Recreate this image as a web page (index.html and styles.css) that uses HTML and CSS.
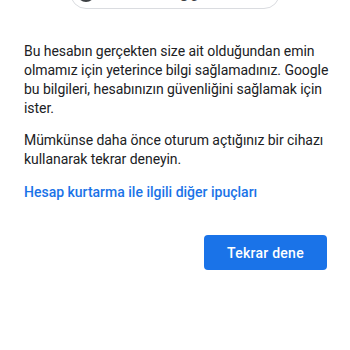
FILE: index.html
```html
<!DOCTYPE html>
<html lang="tr">
<head>
<meta charset="utf-8">
<link rel="stylesheet" href="styles.css">
</head>
<body>
<div class="page">
  <div class="chip-row">
    <div class="chip">
      <span class="avatar"></span>
      <span class="email">kullanici.adi@gmail.com</span>
      <span class="caret"></span>
    </div>
  </div>
  <p class="para first">Bu hesabın gerçekten size ait olduğundan emin olmamız için yeterince bilgi sağlamadınız. Google bu bilgileri, hesabınızın güvenliğini sağlamak için ister.</p>
  <p class="para">Mümkünse daha önce oturum açtığınız bir cihazı kullanarak tekrar deneyin.</p>
  <a class="link" href="#">Hesap kurtarma ile ilgili diğer ipuçları</a>
  <div class="actions">
    <button class="btn" type="button">Tekrar dene</button>
  </div>
</div>
</body>
</html>
```
FILE: styles.css
```css
html, body {
  margin: 0;
  padding: 0;
  background: #fff;
}
body {
  font-family: Roboto, "Noto Sans", Arial, sans-serif;
  color: #202124;
  overflow: hidden;
}
.page {
  padding: 0 24px;
}
.chip-row {
  display: flex;
  justify-content: center;
  margin-top: -23px;
}
.chip {
  box-sizing: border-box;
  width: 210px;
  height: 32px;
  border: 1px solid #dadce0;
  border-radius: 16px;
  display: flex;
  align-items: center;
  padding: 0 8px 0 6px;
  gap: 8px;
}
.avatar {
  width: 18px;
  height: 18px;
  border-radius: 50%;
  background: #3c4043;
  flex: none;
}
.email {
  font-size: 14px;
  font-weight: 500;
  color: #3c4043;
  flex: 1;
  text-align: center;
  white-space: nowrap;
}
.caret {
  width: 0;
  height: 0;
  border-left: 5px solid transparent;
  border-right: 5px solid transparent;
  border-top: 5px solid #5f6368;
}
.para {
  font-size: 14px;
  line-height: 19px;
  margin: 0 -8px 0 0;
  letter-spacing: -0.05px;
}
.para.first {
  margin-top: 33px;
}
.para + .para {
  margin-top: 13px;
}
.link {
  display: block;
  margin-top: 13px;
  font-size: 14px;
  font-weight: 500;
  color: #1a73e8;
  text-decoration: none;
  line-height: 20px;
}
.actions {
  display: flex;
  justify-content: flex-end;
  margin-top: 33px;
}
.btn {
  width: 123px;
  height: 35px;
  border: none;
  border-radius: 4px;
  background: #1a73e8;
  color: #fff;
  font-family: Roboto, "Noto Sans", Arial, sans-serif;
  font-size: 14px;
  font-weight: 500;
  letter-spacing: 0.25px;
  margin-right: -1px;
}
```
